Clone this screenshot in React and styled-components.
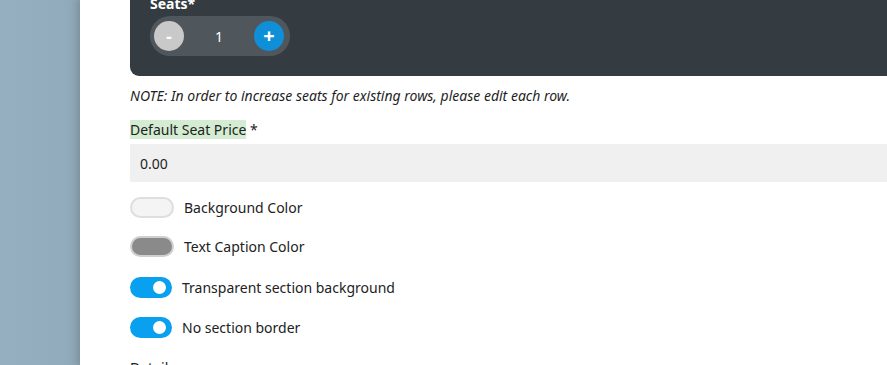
import React from 'react';
import styled, { createGlobalStyle } from 'styled-components';

const GlobalStyle = createGlobalStyle`
  html, body {
    margin: 0;
    padding: 0;
    background: #ffffff;
  }
  body {
    font-family: "Noto Sans", "Open Sans", sans-serif;
    font-size: 14px;
    color: #222;
  }
`;

const Page = styled.div`
  display: flex;
  flex-flow: row nowrap;
  width: 887px;
  height: 365px;
  overflow: hidden;
`;

const Backdrop = styled.div`
  flex: 0 0 80px;
  height: 100%;
  background: linear-gradient(90deg, #95afc0 0%, #92acbd 80%, #8ca4b4 100%);
`;

const Sheet = styled.section`
  flex: 1 1 auto;
  min-width: 0;
  height: 100%;
  background: #fff;
  box-shadow: -3px 0 6px rgba(0, 0, 0, 0.12);
  padding-left: 50px;
`;

const Content = styled.div`
  display: flex;
  flex-direction: column;
  margin-right: -30px;
`;

const DarkPanel = styled.div`
  margin-top: -23px;
  background: #343b41;
  border-radius: 0 0 0 9px;
  padding: 17px 20px 20px;
`;

const PanelLabel = styled.div`
  font-weight: 700;
  font-size: 14px;
  line-height: 20px;
  color: #fff;
  margin-bottom: 2px;
`;

const Stepper = styled.div`
  display: flex;
  align-items: center;
  justify-content: space-between;
  width: 140px;
  height: 40px;
  box-sizing: border-box;
  padding: 0 6px 0 4px;
  border-radius: 20px;
  background: #4f575d;
`;

const StepButton = styled.span`
  display: flex;
  align-items: center;
  justify-content: center;
  width: 30px;
  height: 30px;
  border-radius: 50%;
  background: ${p => (p.primary ? '#0e8fd8' : '#c9c9c9')};
  color: #fff;
  font-weight: 700;
  font-size: ${p => (p.primary ? '20px' : '17px')};
  line-height: 1;
`;

const StepValue = styled.span`
  color: #fff;
  font-size: 14px;
`;

const Note = styled.p`
  margin: 10px 0 0;
  font-style: italic;
  font-size: 14px;
  line-height: 20px;
  color: #1f1f1f;
`;

const FieldLabel = styled.div`
  margin-top: 15px;
  line-height: 18px;
  font-size: 14px;
  color: #222;
`;

const Highlight = styled.span`
  background: #d3ecd2;
`;

const Input = styled.div`
  margin-top: 5px;
  height: 38px;
  box-sizing: border-box;
  padding: 0 10px;
  display: flex;
  align-items: center;
  background: #f0f0f0;
  font-size: 14px;
  color: #222;
`;

const OptionRow = styled.div`
  display: flex;
  align-items: center;
  gap: 10px;
  height: 21px;
  margin-top: ${p => p.gap || 19}px;
  font-size: 14px;
  color: #222;
`;

const Swatch = styled.span`
  flex: 0 0 auto;
  width: 44px;
  height: 21px;
  box-sizing: border-box;
  border-radius: 11px;
  border: 2px solid ${p => p.edge};
  background: ${p => p.fill};
`;

const Toggle = styled.span`
  position: relative;
  flex: 0 0 auto;
  width: 42px;
  height: 21px;
  border-radius: 11px;
  background: #0aa0f0;
  &::after {
    content: '';
    position: absolute;
    right: 6px;
    top: 4px;
    width: 13px;
    height: 13px;
    border-radius: 50%;
    background: #fff;
  }
`;

const SectionTitle = styled.div`
  margin-top: 20px;
  font-size: 14px;
  line-height: 20px;
  color: #222;
`;

export default function App() {
  return (
    <>
      <GlobalStyle />
      <Page>
        <Backdrop />
        <Sheet>
          <Content>
            <DarkPanel>
              <PanelLabel>Seats*</PanelLabel>
              <Stepper>
                <StepButton>-</StepButton>
                <StepValue>1</StepValue>
                <StepButton primary>+</StepButton>
              </Stepper>
            </DarkPanel>
            <Note>NOTE: In order to increase seats for existing rows, please edit each row.</Note>
            <FieldLabel>
              <Highlight>Default Seat Price</Highlight> *
            </FieldLabel>
            <Input>0.00</Input>
            <OptionRow gap={15}>
              <Swatch fill="#f4f4f4" edge="#dedede" />
              Background Color
            </OptionRow>
            <OptionRow gap={18}>
              <Swatch fill="#8a8a8a" edge="#cfcfcf" />
              Text Caption Color
            </OptionRow>
            <OptionRow gap={20}>
              <Toggle />
              Transparent section background
            </OptionRow>
            <OptionRow>
              <Toggle />
              No section border
            </OptionRow>
            <SectionTitle>Details</SectionTitle>
          </Content>
        </Sheet>
      </Page>
    </>
  );
}
